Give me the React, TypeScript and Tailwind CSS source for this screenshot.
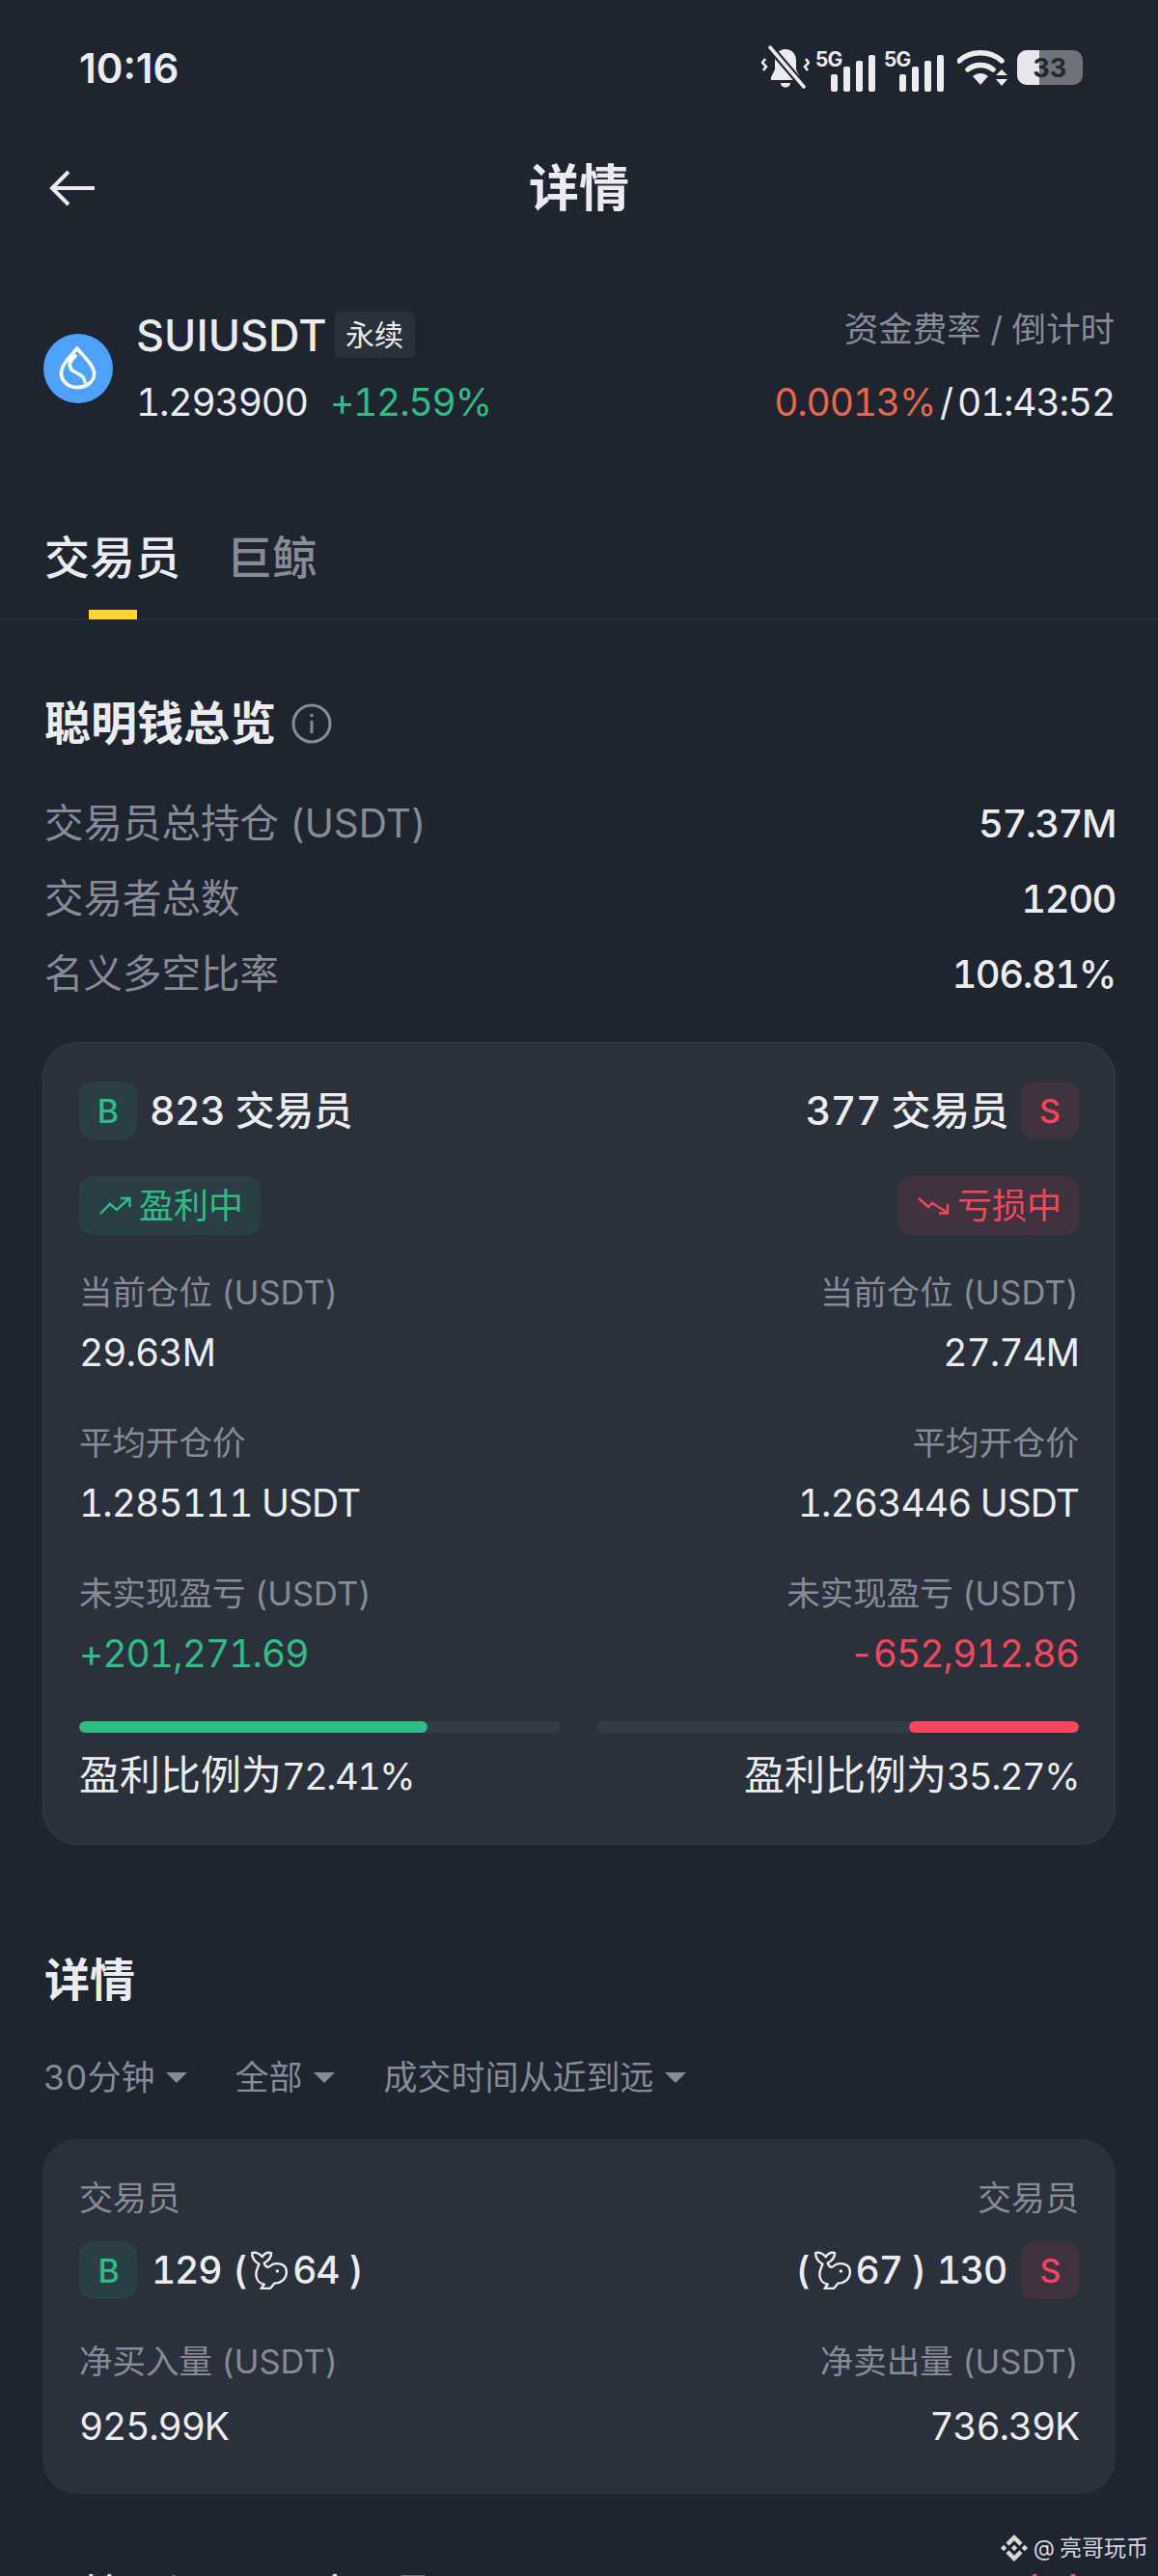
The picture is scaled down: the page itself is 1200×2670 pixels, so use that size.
import { SiBinance } from "react-icons/si"

function Bell() {
  return (
    <svg width="50" height="46" viewBox="0 0 50 46" fill="none">
      <path d="M25 4c-7 0-11 5-11 12v9l-4 8v3h30v-3l-4-8v-9c0-7-4-12-11-12z" fill="#eaecef" />
      <path d="M20 39h10c0 6-10 6-10 0z" fill="#eaecef" />
      <path d="M8 1l36 42" stroke="#1e2430" strokeWidth="8" />
      <path d="M9 2l35 41" stroke="#eaecef" strokeWidth="3.5" strokeLinecap="round" />
      <path d="M4 14l-3 4 4 4-3 4M46 14l3 4-4 4 3 4" stroke="#eaecef" strokeWidth="2.6" />
    </svg>
  )
}

function Signal() {
  return (
    <svg width="62" height="50" viewBox="0 -6 62 50">
      <text x="0" y="18" fill="#eaecef" fontSize="21" fontWeight="700" letterSpacing="-1" fontFamily="Inter, sans-serif">5G</text>
      <rect x="16" y="26" width="7" height="18" rx="2" fill="#eaecef" />
      <rect x="29" y="18" width="7" height="26" rx="2" fill="#eaecef" />
      <rect x="42" y="12" width="7" height="32" rx="2" fill="#eaecef" />
      <rect x="55" y="6" width="7" height="38" rx="2" fill="#eaecef" />
    </svg>
  )
}

function Wifi() {
  return (
    <svg width="52" height="38" viewBox="0 0 52 38" fill="none">
      <path d="M2 12c12-11 32-11 44 0" stroke="#eaecef" strokeWidth="5.5" strokeLinecap="round" />
      <path d="M11 21c7-6 19-6 26 0" stroke="#eaecef" strokeWidth="5.5" strokeLinecap="round" />
      <path d="M16 28c5-4 11-4 16 0l-8 9z" fill="#eaecef" />
      <path d="M46 21l6 6H40zM46 38l6-7H40z" fill="#eaecef" />
    </svg>
  )
}

function Battery() {
  return (
    <div className="relative flex h-[36px] w-[68px] items-center justify-center overflow-hidden rounded-[10px] bg-[#6f737b]">
      <div className="absolute inset-y-0 left-0 w-[23px] bg-[#e6e8ec]" />
      <span className="relative text-[27px] font-bold leading-none text-[#23272f]">33</span>
    </div>
  )
}

function SuiLogo() {
  return (
    <svg width="72" height="72" viewBox="0 0 72 72" fill="none" className="shrink-0">
      <circle cx="36" cy="36" r="36" fill="#4da2ff" />
      <path d="M35 15l11 13c9 10 8 18 2 23-7 6-19 6-25 0-6-6-6-14 1-23z" stroke="#fff" strokeWidth="3.6" strokeLinejoin="round" />
      <path d="M33 23c-6 5-7 10-4 14 3 3 8 4 11 7 2 2 3 4 3 6" stroke="#fff" strokeWidth="3.6" strokeLinecap="round" />
    </svg>
  )
}

function Whale() {
  return (
    <svg width="40" height="41" viewBox="0 0 38 39" fill="none" className="shrink-0">
      <path d="M2 2c4-1 8 1 10 4 2-3 5-5 9-4 0 4-3 8-7 10 1 4 4 5 6 3 2-2 6-3 10-2 4 1 6 4 6 8 0 7-6 11-12 11l-4 5h-9l3-4c-5-1-8-5-8-10 0-4 2-7 3-10C5 11 2 7 2 2z" stroke="#eaecef" strokeWidth="2.3" strokeLinejoin="round" />
      <circle cx="27" cy="20" r="1.7" fill="#eaecef" />
    </svg>
  )
}

function SideBadge({ side }: { side: "B" | "S" }) {
  const buy = side === "B"
  return (
    <div className={`flex h-[60px] w-[60px] shrink-0 items-center justify-center rounded-[14px] text-[34px] font-medium ${buy ? "bg-[#2a3f45] text-[#2ebd85]" : "bg-[#40323f] text-[#f6465d]"}`}>
      {side}
    </div>
  )
}

function TrendPill({ up }: { up: boolean }) {
  return (
    <div className={`mt-[38px] flex h-[61px] w-[188px] items-center rounded-[14px] pl-[21px] ${up ? "bg-[#2a3f45] text-[#2ebd85]" : "bg-[#40323f] text-[#f6465d]"}`}>
      {up ? (
        <svg width="33" height="19" viewBox="0 0 33 19" fill="none" stroke="currentColor" strokeWidth="2.4">
          <path d="M1 18l10-10 7 6L31 2M22 2h9.500v9" />
        </svg>
      ) : (
        <svg width="33" height="19" viewBox="0 0 33 19" fill="none" stroke="currentColor" strokeWidth="2.4">
          <path d="M1 2l10 9 4-4 16 10M31 8v9.500h-9" />
        </svg>
      )}
      <span className="ml-[8px] text-[36px] leading-none">{up ? "盈利中" : "亏损中"}</span>
    </div>
  )
}

function Bar({ pct, right }: { pct: number; right?: boolean }) {
  return (
    <div className={`flex h-[12px] w-[499px] overflow-hidden rounded-full bg-[#343c47] ${right ? "justify-end" : ""}`}>
      <div className={`h-full rounded-full ${right ? "bg-[#f6465d]" : "bg-[#2ebd85]"}`} style={{ width: `${pct}%` }} />
    </div>
  )
}

function Side({ right }: { right?: boolean }) {
  return (
    <div className={`flex flex-col ${right ? "items-end" : "items-start"}`}>
      <div className={`flex items-center gap-[13px] font-medium text-[#eaecef] ${right ? "flex-row-reverse" : ""}`}>
        <SideBadge side={right ? "S" : "B"} />
        <span className="text-[41px] leading-none tracking-[-0.500px]">{right ? "377 交易员" : "823 交易员"}</span>
      </div>
      <TrendPill up={!right} />
    </div>
  )
}

function Caret() {
  return <span className="ml-[12px] h-0 w-0 border-x-[11px] border-t-[11px] border-x-transparent border-t-[#868b96]" />
}

function Ratio({ value }: { value: string }) {
  return (
    <span className="flex items-baseline">
      <span className="text-[42px]">盈利比例为</span>
      <span className="text-[38px] tracking-[-1.500px]">{value}</span>
    </span>
  )
}

const overview = [
  { label: "交易员总持仓 (USDT)", value: "57.37M" },
  { label: "交易者总数", value: "1200" },
  { label: "名义多空比率", value: "106.81%" },
]

const stats = [
  { label: "当前仓位 (USDT)", buy: "29.63M", sell: "27.74M" },
  { label: "平均开仓价", buy: "1.285111 USDT", sell: "1.263446 USDT" },
  { label: "未实现盈亏 (USDT)", buy: "+201,271.69", sell: "-652,912.86" },
]

export default function App() {
  return (
    <div className="relative h-[2670px] w-[1200px] overflow-hidden bg-[#1e2430] tabular-nums text-[#eaecef] [font-family:Inter,'Noto_Sans_CJK_SC',sans-serif]">
      {/* status bar */}
      <div className="flex h-[140px] items-center justify-between pl-[82px] pr-[78px]">
        <span className="text-[42px] font-semibold [font-variant-numeric:normal]">10:16</span>
        <div className="flex items-center">
          <Bell />
          <div className="ml-[6px]"><Signal /></div>
          <div className="ml-[9px]"><Signal /></div>
          <div className="ml-[14px]"><Wifi /></div>
          <div className="ml-[10px]"><Battery /></div>
        </div>
      </div>

      {/* nav */}
      <div className="relative flex h-[110px] items-center justify-center pt-[2px]">
        <svg width="48" height="38" viewBox="0 0 48 38" fill="none" stroke="#eaecef" strokeWidth="4" className="absolute left-[51px] top-[36px]">
          <path d="M47 19H3M20 2L3 19l17 17" />
        </svg>
        <span className="text-[52px] font-semibold">详情</span>
      </div>

      {/* coin header */}
      <div className="mt-[72px] flex h-[120px] justify-between px-[45px]">
        <div className="flex items-center">
          <SuiLogo />
          <div className="ml-[24px]">
            <div className="flex h-[50px] items-center">
              <span className="text-[45px] font-medium leading-none">SUIUSDT</span>
              <span className="ml-[8px] flex h-[48px] w-[83px] items-center justify-center rounded-[6px] bg-[#2b313c] text-[30px]">永续</span>
            </div>
            <div className="mt-[20px] flex h-[50px] items-center text-[39px] tracking-[-1.200px]">
              <span>1.293900</span>
              <span className="ml-[23px] text-[#2ebd85]">+12.59%</span>
            </div>
          </div>
        </div>
        <div className="flex flex-col items-end">
          <div className="flex h-[40px] items-center text-[35.500px] text-[#868b96]">资金费率 / 倒计时</div>
          <div className="mt-[30px] flex h-[50px] items-center text-[39px] tracking-[-1.200px]">
            <span className="text-[#e8674a]">0.0013%</span>
            <span className="mx-[5px]">/</span>
            <span>01:43:52</span>
          </div>
        </div>
      </div>

      {/* tabs */}
      <div className="mt-[110px] border-b border-[#2b313c] pl-[46px]">
        <div className="flex gap-[48px]">
          <div className="flex flex-col items-center">
            <span className="flex h-[52px] items-center text-[47px] font-medium">交易员</span>
            <span className="mt-[28px] h-[10px] w-[50px] bg-[#fcd535]" />
          </div>
          <span className="flex h-[52px] items-center text-[47px] font-medium text-[#868b96]">巨鲸</span>
        </div>
      </div>

      <div className="px-[44px]">
        {/* overview */}
        <div className="mt-[83px] flex h-[48px] items-center pl-[2px]">
          <span className="text-[48px] font-bold">聪明钱总览</span>
          <svg width="42" height="42" viewBox="0 0 42 42" fill="none" stroke="#868b96" strokeWidth="3" className="ml-[16px]">
            <circle cx="21" cy="21" r="19" />
            <path d="M21 18v13M21 11v3" />
          </svg>
        </div>
        <div className="mt-[58px] flex flex-col gap-[34px] pl-[2px]">
          {overview.map((row) => (
            <div key={row.label} className="flex h-[44px] items-center justify-between">
              <span className="text-[40.500px] text-[#868b96]">{row.label}</span>
              <span className="text-[40px] font-medium tracking-[-1.500px]">{row.value}</span>
            </div>
          ))}
        </div>

        {/* long/short card */}
        <div className="mt-[48px] rounded-[36px] border border-[#353b47] bg-[#2b313c] px-[37px] pb-[50px] pt-[40px]">
          <div className="flex justify-between">
            <Side />
            <Side right />
          </div>
          <div className="mt-[38px] flex flex-col gap-[50px]">
            {stats.map((s) => (
              <div key={s.label} className="flex justify-between">
                <div>
                  <div className="flex h-[44px] items-center text-[34.500px] text-[#868b96]">{s.label}</div>
                  <div className={`mt-[18px] flex h-[44px] items-center text-[39px] tracking-[-1px] ${s.buy.startsWith("+") ? "text-[#2ebd85]" : ""}`}>{s.buy}</div>
                </div>
                <div className="flex flex-col items-end">
                  <div className="flex h-[44px] items-center text-[34.500px] text-[#868b96]">{s.label}</div>
                  <div className={`mt-[18px] flex h-[44px] items-center text-[39px] tracking-[-1px] ${s.sell.startsWith("-") ? "text-[#f6465d]" : ""}`}>{s.sell}</div>
                </div>
              </div>
            ))}
          </div>
          <div className="mt-[48px] flex justify-between">
            <Bar pct={72.41} />
            <Bar pct={35.27} right />
          </div>
          <div className="mt-[21px] flex h-[44px] items-center justify-between">
            <Ratio value="72.41%" />
            <Ratio value="35.27%" />
          </div>
        </div>

        {/* details */}
        <div className="mt-[116px] flex h-[48px] items-center pl-[2px] text-[47px] font-bold">详情</div>
        <div className="mt-[55px] flex h-[44px] items-center pl-[1px] text-[35px] text-[#868b96]">
          <span>30分钟</span>
          <Caret />
          <span className="ml-[49px]">全部</span>
          <Caret />
          <span className="ml-[50px]">成交时间从近到远</span>
          <Caret />
        </div>

        <div className="mt-[42px] h-[368px] rounded-[36px] bg-[#2b313c] px-[38px] pt-[39px]">
          <div className="flex h-[44px] items-center justify-between text-[35px] text-[#868b96]">
            <span>交易员</span>
            <span>交易员</span>
          </div>
          <div className="mt-[23px] flex items-center justify-between text-[39px] font-medium tracking-[-1.200px]">
            <div className="flex items-center">
              <SideBadge side="B" />
              <span className="ml-[15px]">129</span>
              <span className="ml-[12px] mr-[4px]">(</span>
              <Whale />
              <span className="ml-[4px]">64</span>
              <span className="ml-[10px]">)</span>
            </div>
            <div className="flex items-center">
              <span className="mr-[4px]">(</span>
              <Whale />
              <span className="ml-[4px]">67</span>
              <span className="ml-[10px] mr-[12px]">)</span>
              <span className="mr-[15px]">130</span>
              <SideBadge side="S" />
            </div>
          </div>
          <div className="mt-[43px] flex h-[44px] items-center justify-between text-[34.500px] text-[#868b96]">
            <span>净买入量 (USDT)</span>
            <span>净卖出量 (USDT)</span>
          </div>
          <div className="mt-[23px] flex h-[44px] items-center justify-between text-[39px] tracking-[-1.200px]">
            <span>925.99K</span>
            <span>736.39K</span>
          </div>
        </div>

        {/* next section, cut off by the bottom of the screen */}
        <div className="mt-[79px] flex h-[48px] items-center justify-between pl-[2px] pr-[24px] text-[40px] font-medium">
          <span>巨鲸买入 · 129 交易员</span>
          <span className="text-[#f6465d]">卖出</span>
        </div>
      </div>

      {/* watermark */}
      <div className="absolute bottom-[12px] right-[10px] flex items-center text-[#d5d7db]">
        <SiBinance size={28} />
        <span className="ml-[6px] text-[23px]">@</span>
        <span className="ml-[5px] text-[23px]">亮哥玩币</span>
      </div>
    </div>
  )
}
